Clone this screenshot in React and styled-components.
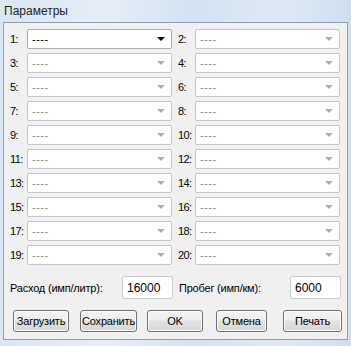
import React from 'react';
import styled, { createGlobalStyle } from 'styled-components';

const GlobalStyle = createGlobalStyle`
  html, body {
    margin: 0;
    padding: 0;
  }
  body {
    font-family: "Liberation Sans", Arial, sans-serif;
  }
`;

const Window = styled.div`
  width: 351px;
  height: 346px;
  box-sizing: border-box;
  padding: 0 3px 6px 3px;
  display: flex;
  flex-direction: column;
  background: linear-gradient(90deg, #d9e6f3 0%, #e6eef8 30%, #d3e2f2 55%, #dfe9f5 80%, #cfdff0 100%);
  overflow: hidden;
`;

const TitleBar = styled.div`
  height: 22px;
  display: flex;
  align-items: center;
  padding-left: 1px;
  font-size: 12px;
  color: #1e1e1e;
`;

const Body = styled.div`
  flex: 1;
  background: #f0f0f0;
  border: 1px solid #8d9fb6;
  box-sizing: border-box;
  padding: 6px 5px 0 6px;
  display: flex;
  flex-direction: column;
`;

const Grid = styled.div`
  display: grid;
  grid-template-columns: 17px 145px 23px 145px;
  row-gap: 4px;
`;

const Label = styled.div`
  font-size: 11px;
  color: #000;
  height: 20px;
  line-height: 20px;
  white-space: nowrap;
  letter-spacing: -0.6px;
  padding-left: ${p => (p.$right ? 6 : 0)}px;
`;

const Combo = styled.div`
  height: 20px;
  box-sizing: border-box;
  background: #fff;
  border: 1px solid ${p => (p.$enabled ? '#a5acb5' : '#c3c6ca')};
  border-radius: 2px;
  display: flex;
  align-items: center;
  padding: 0 6px 0 4px;
  font-size: 11px;
  color: ${p => (p.$enabled ? '#000' : '#8b8b8b')};
`;

const ComboText = styled.span`
  flex: 1;
  letter-spacing: 0.5px;
  line-height: 1;
`;

const Arrow = styled.span`
  width: 0;
  height: 0;
  border-left: 4px solid transparent;
  border-right: 4px solid transparent;
  border-top: 4px solid ${p => (p.$enabled ? '#000' : '#b0b0b0')};
`;

const FieldRow = styled.div`
  display: flex;
  align-items: center;
  margin-top: 11px;
  height: 23px;
`;

const FieldLabel = styled.div`
  font-size: 11px;
  width: ${p => p.$w}px;
  white-space: nowrap;
  letter-spacing: -0.2px;
`;

const TextBox = styled.div`
  width: 51px;
  height: 23px;
  box-sizing: border-box;
  background: #fff;
  border: 1px solid #c8ccd1;
  border-radius: 2px;
  font-size: 12px;
  padding: 4px 0 0 4px;
  margin-right: ${p => p.$mr || 0}px;
`;

const ButtonRow = styled.div`
  display: flex;
  margin-top: 11px;
  padding-left: 3px;
`;

const Button = styled.div`
  width: ${p => p.$w}px;
  margin-left: ${p => p.$ml || 0}px;
  height: 22px;
  box-sizing: border-box;
  border: 1px solid #707070;
  border-radius: 3px;
  background: linear-gradient(#f4f4f4 0%, #eeeeee 45%, #e2e2e2 50%, #d6d6d6 100%);
  box-shadow: inset 0 0 0 1px #fcfcfc;
  display: flex;
  align-items: center;
  justify-content: center;
  font-size: 11px;
  color: #000;
  letter-spacing: -0.2px;
`;

const items = Array.from({ length: 20 }, (_, i) => i + 1);

export default function App() {
  return (
    <>
      <GlobalStyle />
      <Window>
        <TitleBar>Параметры</TitleBar>
        <Body>
          <Grid>
            {items.map(n => {
              const enabled = n === 1;
              return (
                <React.Fragment key={n}>
                  <Label $right={n % 2 === 0}>{n}:</Label>
                  <Combo $enabled={enabled}>
                    <ComboText>----</ComboText>
                    <Arrow $enabled={enabled} />
                  </Combo>
                </React.Fragment>
              );
            })}
          </Grid>
          <FieldRow>
            <FieldLabel $w={112}>Расход (имп/литр):</FieldLabel>
            <TextBox $mr={6}>16000</TextBox>
            <FieldLabel $w={111}>Пробег (имп/км):</FieldLabel>
            <TextBox>6000</TextBox>
          </FieldRow>
          <ButtonRow>
            <Button $w={56}>Загрузить</Button>
            <Button $w={57} $ml={11}>Сохранить</Button>
            <Button $w={56} $ml={10}>OK</Button>
            <Button $w={51} $ml={13}>Отмена</Button>
            <Button $w={59} $ml={16}>Печать</Button>
          </ButtonRow>
        </Body>
      </Window>
    </>
  );
}
